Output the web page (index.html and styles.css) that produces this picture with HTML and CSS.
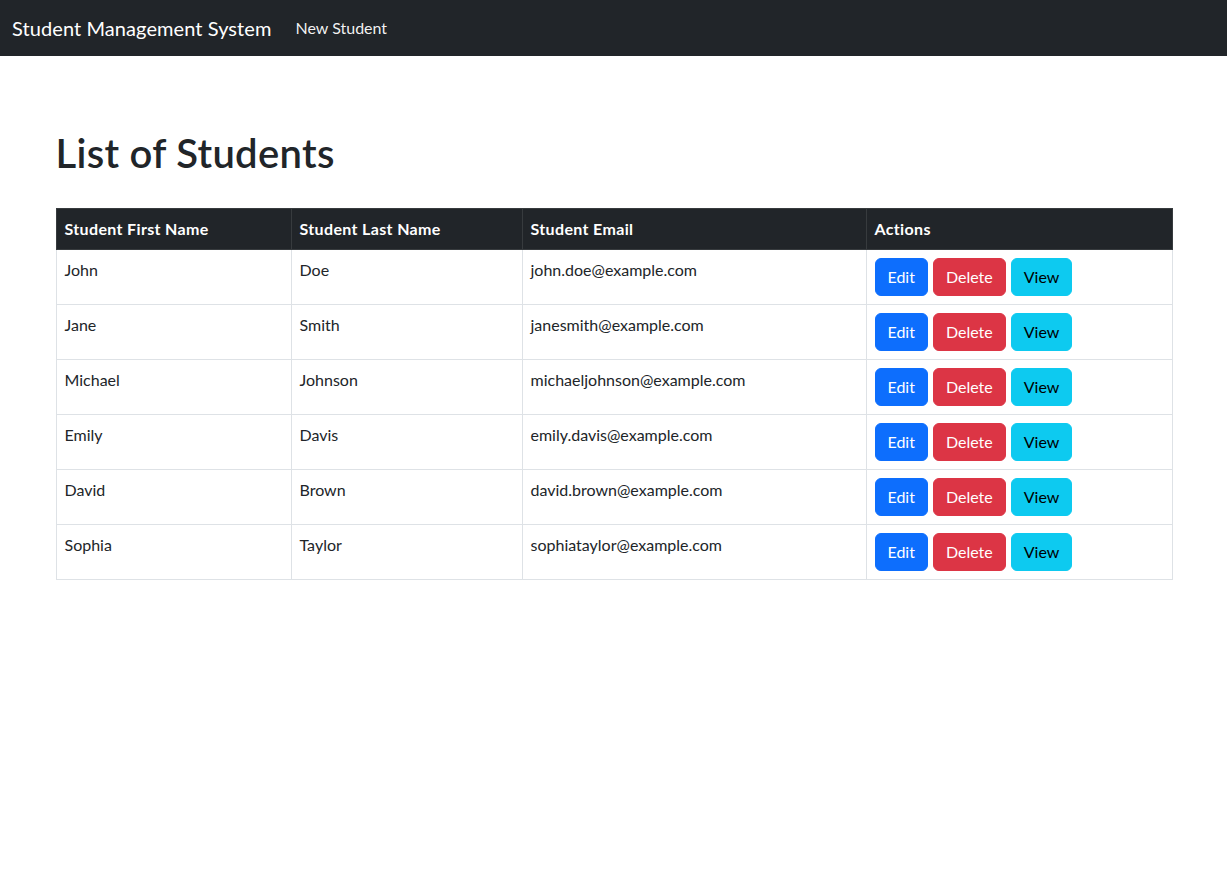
FILE: index.html
```html
<!DOCTYPE html>
<html lang="en">
<head>
<meta charset="utf-8">
<title>Student Management System</title>
<link rel="stylesheet" href="styles.css">
</head>
<body>
<nav class="navbar">
  <a class="brand" href="#">Student Management System</a>
  <a class="nav-link" href="#">New Student</a>
</nav>
<main class="container">
  <h1 class="title">List of Students</h1>
  <table class="table">
    <colgroup>
      <col class="c1"><col class="c2"><col class="c3"><col class="c4">
    </colgroup>
    <thead>
      <tr><th>Student First Name</th><th>Student Last Name</th><th>Student Email</th><th>Actions</th></tr>
    </thead>
    <tbody>
      <tr><td>John</td><td>Doe</td><td>john.doe@example.com</td><td><div class="actions"><a class="btn btn-primary" href="#">Edit</a><a class="btn btn-danger" href="#">Delete</a><a class="btn btn-info" href="#">View</a></div></td></tr>
      <tr><td>Jane</td><td>Smith</td><td>janesmith@example.com</td><td><div class="actions"><a class="btn btn-primary" href="#">Edit</a><a class="btn btn-danger" href="#">Delete</a><a class="btn btn-info" href="#">View</a></div></td></tr>
      <tr><td>Michael</td><td>Johnson</td><td>michaeljohnson@example.com</td><td><div class="actions"><a class="btn btn-primary" href="#">Edit</a><a class="btn btn-danger" href="#">Delete</a><a class="btn btn-info" href="#">View</a></div></td></tr>
      <tr><td>Emily</td><td>Davis</td><td>emily.davis@example.com</td><td><div class="actions"><a class="btn btn-primary" href="#">Edit</a><a class="btn btn-danger" href="#">Delete</a><a class="btn btn-info" href="#">View</a></div></td></tr>
      <tr><td>David</td><td>Brown</td><td>david.brown@example.com</td><td><div class="actions"><a class="btn btn-primary" href="#">Edit</a><a class="btn btn-danger" href="#">Delete</a><a class="btn btn-info" href="#">View</a></div></td></tr>
      <tr><td>Sophia</td><td>Taylor</td><td>sophiataylor@example.com</td><td><div class="actions"><a class="btn btn-primary" href="#">Edit</a><a class="btn btn-danger" href="#">Delete</a><a class="btn btn-info" href="#">View</a></div></td></tr>
    </tbody>
  </table>
</main>
</body>
</html>
```
FILE: styles.css
```css
* { box-sizing: border-box; }
html, body { margin: 0; padding: 0; }
body {
  font-family: "Lato", "Open Sans", "Liberation Sans", sans-serif;
  font-size: 16px;
  line-height: 1.5;
  color: #212529;
  background: #fff;
}
a { text-decoration: none; }

.navbar {
  display: flex;
  align-items: center;
  height: 56px;
  padding: 8px 12px;
  background: #212529;
}
.brand {
  font-size: 20px;
  line-height: 30px;
  color: #fff;
  margin-right: 16px;
  letter-spacing: 0.08px;
}
.nav-link {
  font-size: 16px;
  line-height: 24px;
  padding: 8px;
  color: rgba(255, 255, 255, 0.95);
}

.container {
  width: 1140px;
  margin: 0 auto;
  padding: 73px 12px 0;
}
.title {
  margin: 0 0 31px;
  font-size: 40px;
  font-weight: 600;
  line-height: 48px;
  letter-spacing: 0.3px;
}

.table {
  width: 1116px;
  border-collapse: collapse;
  table-layout: fixed;
}
.c1 { width: 235px; }
.c2 { width: 231px; }
.c3 { width: 344px; }
.c4 { width: 306px; }
.table th, .table td {
  padding: 8px;
  text-align: left;
  vertical-align: top;
  border: 1px solid #dee2e6;
}
.table th {
  background: #212529;
  color: #fff;
  font-weight: 700;
  letter-spacing: 0.35px;
  border-color: #373b3e;
}
.actions {
  display: flex;
  gap: 5px;
}
.btn {
  display: inline-block;
  padding: 6px 12px;
  font-size: 16px;
  line-height: 24px;
  border: 1px solid transparent;
  border-radius: 6px;
}
.btn-primary { background: #0d6efd; border-color: #0d6efd; color: #fff; }
.btn-danger { background: #dc3545; border-color: #dc3545; color: #fff; }
.btn-info { background: #0dcaf0; border-color: #0dcaf0; color: #000; }
```
